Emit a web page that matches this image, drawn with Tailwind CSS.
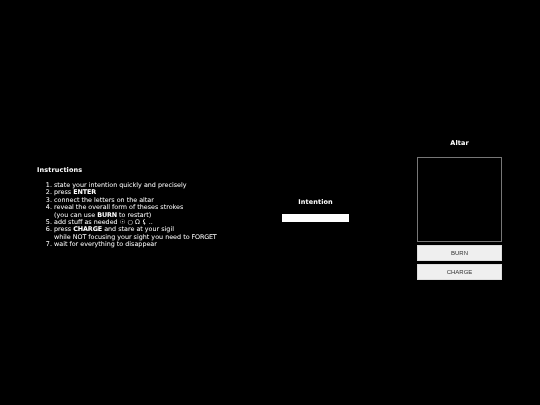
<!DOCTYPE html>
<html lang="en">
<head>
<meta charset="UTF-8">
<title>Sigil</title>
<script src="https://cdn.jsdelivr.net/npm/@tailwindcss/browser@4"></script>
</head>
<body class="bg-black">
<main class="w-[540px] h-[405px] text-white flex items-center pl-[37px] pt-[12px] font-['DejaVu_Sans',sans-serif] antialiased overflow-hidden">
    <section class="w-[190px] -mt-[3px] will-change-transform">
        <h2 class="text-[6.5px] leading-[10px] font-bold mb-[7px] tracking-[0.1px]">Instructions</h2>
        <ol class="list-decimal pl-[17px] text-[6.4px] leading-[7.4px] text-white">
            <li>state your intention quickly and precisely</li>
            <li>press <b class="tracking-[-0.1px]">ENTER</b></li>
            <li>connect the letters on the altar</li>
            <li>reveal the overall form of theses strokes<br>(you can use <b class="tracking-[-0.1px]">BURN</b> to restart)</li>
            <li>add stuff as needed ☉ ○ Ω ⚸ ..</li>
            <li>press <b class="tracking-[-0.1px]">CHARGE</b> and stare at your sigil<br>while <span class="tracking-[-0.1px]">NOT</span> focusing your sight you need to <span class="tracking-[-0.2px]">FORGET</span></li>
            <li>wait for everything to disappear</li>
        </ol>
    </section>
    <section class="w-[67px] flex flex-col items-center ml-[55px] mt-[2px] will-change-transform">
        <h2 class="text-[6.5px] leading-[10px] font-bold mb-[7px] tracking-[0.1px]">Intention</h2>
        <input type="text" class="w-[67px] h-[8px] bg-white border-0 block">
    </section>
    <section class="w-[85px] flex flex-col items-center ml-[68px] will-change-transform">
        <h2 class="text-[6.5px] leading-[10px] font-bold mb-[9px] tracking-[0.1px]">Altar</h2>
        <div class="w-[85px] h-[85px] border border-[#777] mb-[3px]"></div>
        <button class="w-[85px] h-[16px] bg-[#efefef] border border-[#ddd] text-[#333] text-[6px] font-['Liberation_Sans',sans-serif] mb-[3px]">BURN</button>
        <button class="w-[85px] h-[16px] bg-[#efefef] border border-[#ddd] text-[#333] text-[6px] font-['Liberation_Sans',sans-serif]">CHARGE</button>
    </section>
</main>
</body>
</html>
